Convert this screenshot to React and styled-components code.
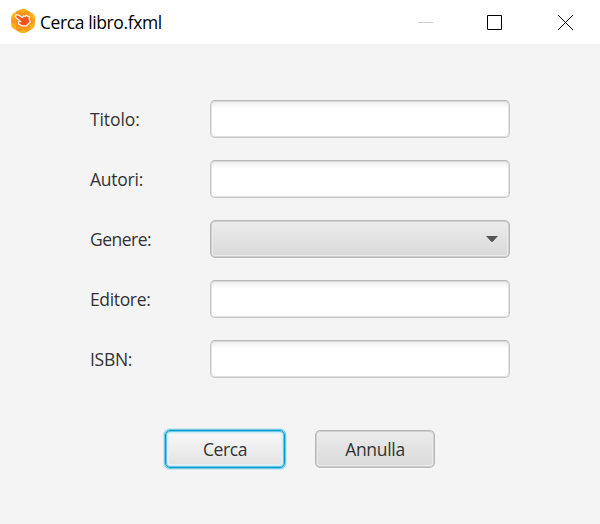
import React from "react";
import styled, { createGlobalStyle, css } from "styled-components";

const GlobalStyle = createGlobalStyle`
  *, *::before, *::after { box-sizing: border-box; }
  body {
    margin: 0;
    background: #f4f4f4;
    font-family: "Open Sans", "Noto Sans", sans-serif;
  }
`;

const Window = styled.div`
  display: flex;
  flex-direction: column;
  width: 600px;
  height: 524px;
  background: #f4f4f4;
  overflow: hidden;
`;

const TitleBar = styled.header`
  display: flex;
  align-items: center;
  height: 44px;
  padding-left: 10px;
  background: #fff;
`;

const AppIcon = styled.svg`
  width: 26px;
  height: 26px;
  margin-bottom: 2px;
`;

const Title = styled.h1`
  flex: 1;
  margin: 0 0 1px 4px;
  font-size: 17.5px;
  font-weight: 400;
  line-height: 24px;
  letter-spacing: ${(p) => p.$tracking}px;
  color: #000;
  white-space: nowrap;
`;

const WindowControls = styled.div`
  display: flex;
  height: 44px;
`;

const WindowControl = styled.button`
  width: ${(p) => p.$width}px;
  height: 44px;
  padding: 0;
  border: 0;
  background: transparent;
  color: ${(p) => (p.disabled ? "#ccc" : "#000")};

  svg {
    display: block;
    width: 15px;
    height: 15px;
    margin: 0 auto;
  }
`;

const Form = styled.form`
  display: flex;
  flex-direction: column;
  padding: 56px 90px 0;
`;

const Fields = styled.div`
  display: grid;
  row-gap: 22px;
`;

const FieldRow = styled.div`
  display: grid;
  grid-template-columns: 120px 300px;
  align-items: center;
  height: 38px;
`;

const Label = styled.label`
  font-size: 17.5px;
  line-height: 24px;
  letter-spacing: ${(p) => p.$tracking}px;
  color: #333;
  white-space: nowrap;
`;

const raised = css`
  border: 1px solid #b8b8b8;
  border-radius: 5px;
  background: linear-gradient(#ececec, #d9d9d9);
  box-shadow: inset 0 0 0 1px rgba(186, 186, 186, 0.6),
    inset 0 0 0 2px #ebebeb, 0 1px 0 #fafafa;
`;

const TextInput = styled.input`
  width: 300px;
  height: 38px;
  padding: 0 10px;
  border: 1px solid #c8c8c8;
  border-top-color: #b9b9b9;
  border-radius: 5px;
  outline: 0;
  background: linear-gradient(#e9e9e9 0, #f5f5f5 3px, #fff 8px);
  box-shadow: inset 0 0 0 1px rgba(200, 200, 200, 0.55);
  font: inherit;
`;

const ComboBox = styled.button`
  display: flex;
  align-items: center;
  justify-content: flex-end;
  width: 300px;
  height: 38px;
  padding: 0 11px;
  ${raised}
`;

const Arrow = styled.svg`
  width: 12px;
  height: 6px;
`;

const Actions = styled.div`
  display: flex;
  justify-content: center;
  gap: 30px;
  margin-top: 52px;
`;

const ActionButton = styled.button`
  width: 120px;
  height: 38px;
  padding: 0 0 1px;
  ${raised}
  font-family: inherit;
  font-size: 17.5px;
  line-height: 24px;
  letter-spacing: ${(p) => p.$tracking}px;
  color: #333;
  ${(p) =>
    p.$primary &&
    css`
      border-color: #039ed3;
      background: linear-gradient(#fafafa, #e1e1e1);
      box-shadow: 0 0 0 1px rgba(3, 158, 211, 0.45),
        0 0 0 2px rgba(3, 158, 211, 0.15),
        inset 0 0 0 1px rgba(3, 158, 211, 0.5),
        inset 0 0 0 2px #d2edf5, inset 0 0 0 3px #e4f1f4;
    `}
`;

const fields = [
  { id: "titolo", label: "Titolo:", tracking: -0.1 },
  { id: "autori", label: "Autori:", tracking: -0.25 },
  { id: "genere", label: "Genere:", tracking: -0.5, combo: true },
  { id: "editore", label: "Editore:", tracking: -0.35 },
  { id: "isbn", label: "ISBN:", tracking: -0.3 },
];

function HandIcon() {
  return (
    <AppIcon viewBox="0 0 26 26" aria-hidden="true">
      <path
        d="M10 1.600Q13 0 16 1.600L22.400 5.200Q25 6.800 25 10v6q0 3.200-2.600 4.800L16 24.400q-3 1.600-6 0l-6.400-3.600Q1 19.200 1 16v-6q0-3.200 2.600-4.800Z"
        fill="#fdb515"
      />
      <g fill="#f98a1c" fillOpacity="0.7">
        <ellipse cx="13" cy="13" rx="5" ry="11.500" transform="rotate(30 13 13)" />
        <ellipse cx="13" cy="13" rx="5" ry="11.500" transform="rotate(90 13 13)" />
        <ellipse cx="13" cy="13" rx="5" ry="11.500" transform="rotate(150 13 13)" />
      </g>
      <path
        d="M5.800 7.300q1-1 2.300-.3L12.300 9.600 13.500 7.800 15.200 8.500 16.500 7.300 18 8.500 19.300 8.700 19.200 11.500 20.300 14 16.200 18 12.300 17.800 8.500 15.800 8.400 13.900 10.800 13.700 6 9.500Q5.100 8.300 5.800 7.300Z"
        fill="#f4511e"
        stroke="#fff0e8"
        strokeWidth="1.300"
        strokeLinejoin="round"
      />
    </AppIcon>
  );
}

export default function App() {
  return (
    <>
      <GlobalStyle />
      <Window>
        <TitleBar>
          <HandIcon />
          <Title $tracking={-0.4}>Cerca libro.fxml</Title>
          <WindowControls>
            <WindowControl $width={69} disabled aria-label="Riduci a icona">
              <svg viewBox="0 0 15 15">
                <path d="M0 7.500h15" stroke="currentColor" />
              </svg>
            </WindowControl>
            <WindowControl $width={69} aria-label="Ingrandisci">
              <svg viewBox="0 0 15 15">
                <path d="M.5.5h14v14H.5z" fill="none" stroke="currentColor" />
              </svg>
            </WindowControl>
            <WindowControl $width={71} aria-label="Chiudi">
              <svg viewBox="-1 0 15 15" overflow="visible">
                <path d="M0 0l15 15M15 0L0 15" stroke="currentColor" />
              </svg>
            </WindowControl>
          </WindowControls>
        </TitleBar>
        <Form>
          <Fields>
            {fields.map(({ id, label, tracking, combo }) => (
              <FieldRow key={id}>
                <Label htmlFor={id} $tracking={tracking}>
                  {label}
                </Label>
                {combo ? (
                  <ComboBox id={id} type="button">
                    <Arrow viewBox="0 0 12 6">
                      <path d="M0 0h12L7 5.500q-1 .8-2 0Z" fill="#555" />
                    </Arrow>
                  </ComboBox>
                ) : (
                  <TextInput id={id} />
                )}
              </FieldRow>
            ))}
          </Fields>
          <Actions>
            <ActionButton type="button" $primary $tracking={-0.4}>
              Cerca
            </ActionButton>
            <ActionButton type="button" $tracking={-0.3}>
              Annulla
            </ActionButton>
          </Actions>
        </Form>
      </Window>
    </>
  );
}
